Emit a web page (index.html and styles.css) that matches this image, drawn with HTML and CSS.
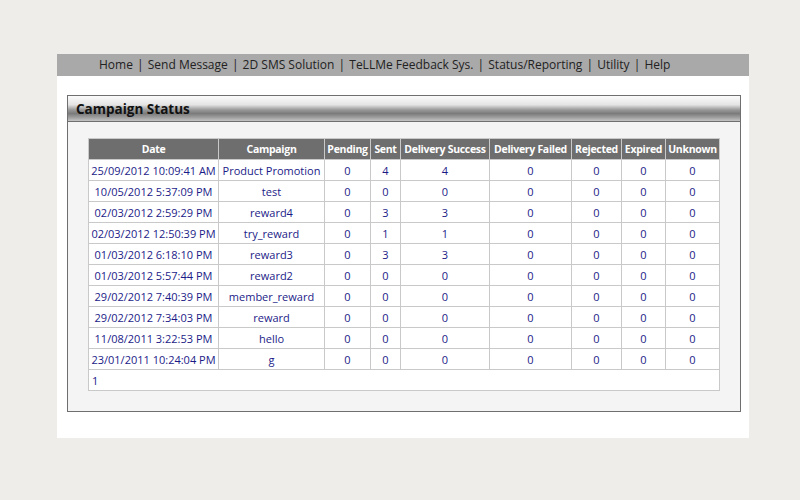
FILE: index.html
```html
<!DOCTYPE html>
<html lang="en">
<head>
    <meta charset="UTF-8">
    <title>Campaign Status</title>
    <link rel="stylesheet" href="styles.css">
</head>
<body>
    <div class="page">
        <div class="menu">
            <a href="#">Home</a> |
            <a href="#">Send Message</a> |
            <a href="#">2D SMS Solution</a> |
            <a href="#">TeLLMe Feedback Sys.</a> |
            <a href="#">Status/Reporting</a> |
            <a href="#">Utility</a> |
            <a href="#">Help</a>
        </div>

        <div class="panel">
            <div class="panel-title">Campaign Status</div>
            <div class="panel-body">
                <table class="grid">
                    <colgroup>
                        <col class="c-date">
                        <col class="c-camp">
                        <col class="c-pend">
                        <col class="c-sent">
                        <col class="c-succ">
                        <col class="c-fail">
                        <col class="c-rej">
                        <col class="c-exp">
                        <col class="c-unk">
                    </colgroup>
                    <tr>
                        <th>Date</th>
                        <th>Campaign</th>
                        <th>Pending</th>
                        <th>Sent</th>
                        <th>Delivery Success</th>
                        <th>Delivery Failed</th>
                        <th>Rejected</th>
                        <th>Expired</th>
                        <th>Unknown</th>
                    </tr>
                    <tr><td>25/09/2012 10:09:41 AM</td><td>Product Promotion</td><td>0</td><td>4</td><td>4</td><td>0</td><td>0</td><td>0</td><td>0</td></tr>
                    <tr><td>10/05/2012 5:37:09 PM</td><td>test</td><td>0</td><td>0</td><td>0</td><td>0</td><td>0</td><td>0</td><td>0</td></tr>
                    <tr><td>02/03/2012 2:59:29 PM</td><td>reward4</td><td>0</td><td>3</td><td>3</td><td>0</td><td>0</td><td>0</td><td>0</td></tr>
                    <tr><td>02/03/2012 12:50:39 PM</td><td>try_reward</td><td>0</td><td>1</td><td>1</td><td>0</td><td>0</td><td>0</td><td>0</td></tr>
                    <tr><td>01/03/2012 6:18:10 PM</td><td>reward3</td><td>0</td><td>3</td><td>3</td><td>0</td><td>0</td><td>0</td><td>0</td></tr>
                    <tr><td>01/03/2012 5:57:44 PM</td><td>reward2</td><td>0</td><td>0</td><td>0</td><td>0</td><td>0</td><td>0</td><td>0</td></tr>
                    <tr><td>29/02/2012 7:40:39 PM</td><td>member_reward</td><td>0</td><td>0</td><td>0</td><td>0</td><td>0</td><td>0</td><td>0</td></tr>
                    <tr><td>29/02/2012 7:34:03 PM</td><td>reward</td><td>0</td><td>0</td><td>0</td><td>0</td><td>0</td><td>0</td><td>0</td></tr>
                    <tr><td>11/08/2011 3:22:53 PM</td><td>hello</td><td>0</td><td>0</td><td>0</td><td>0</td><td>0</td><td>0</td><td>0</td></tr>
                    <tr><td>23/01/2011 10:24:04 PM</td><td>g</td><td>0</td><td>0</td><td>0</td><td>0</td><td>0</td><td>0</td><td>0</td></tr>
                    <tr class="pager"><td colspan="9">1</td></tr>
                </table>
            </div>
        </div>
    </div>
</body>
</html>
```

FILE: styles.css
```css
body {
    margin: 0;
    background-color: #eeede9;
    font-family: "Open Sans", Arial, sans-serif;
    font-size: 11px;
}
.page {
    width: 692px;
    margin: 54px 0 0 57px;
    padding-bottom: 26px;
    background-color: #fff;
}
.menu {
    height: 22px;
    line-height: 22px;
    padding-left: 42px;
    background-color: #a9a9a9;
    color: #222;
    font-size: 12px;
    word-spacing: 1px;
}
.menu a {
    color: #222;
    text-decoration: none;
    word-spacing: normal;
}
.panel {
    margin: 19px 8px 0 10px;
    border: 1px solid #6f6f6f;
    background-color: #f4f4f4;
}
.panel-title {
    height: 25px;
    line-height: 26px;
    padding-left: 8px;
    border-bottom: 1px solid #6f6f6f;
    background: linear-gradient(#fbfbfb 0%, #e4e4e4 35%, #9a9a9a 55%, #7b7b7b 70%, #9c9c9c 85%, #c4c4c4 100%);
    font-size: 13.5px;
    font-weight: bold;
    color: #111;
}
.panel-body {
    padding: 16px 20px 20px 20px;
}
.grid {
    width: 632px;
    table-layout: fixed;
    border-collapse: collapse;
    background-color: #fff;
}
.grid th,
.grid td {
    height: 20px;
    padding: 0;
    border: 1px solid #c9c9c9;
    text-align: center;
    white-space: nowrap;
    overflow: hidden;
}
.grid th {
    background-color: #6e6e6e;
    color: #fff;
    font-size: 10.5px;
    font-weight: bold;
    letter-spacing: -0.3px;
}
.grid td {
    color: #1b1b88;
}
.grid .pager td {
    text-align: left;
    padding-left: 3px;
    color: #1b1b88;
}
.c-date { width: 130px; }
.c-camp { width: 106px; }
.c-pend { width: 46px; }
.c-sent { width: 30px; }
.c-succ { width: 89px; }
.c-fail { width: 82px; }
.c-rej { width: 50px; }
.c-exp { width: 44px; }
.c-unk { width: 54px; }
```
